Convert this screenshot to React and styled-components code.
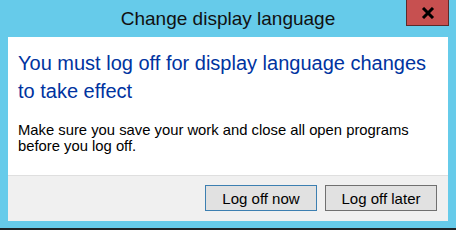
import React from 'react'
import styled, {createGlobalStyle, css} from 'styled-components'

const GlobalStyle = createGlobalStyle`
  html, body {
    margin: 0;
    padding: 0;
    width: 456px;
    height: 230px;
    overflow: hidden;
    background: #66cbea;
  }
  body {
    font-family: "Liberation Sans", Arial, sans-serif;
    color: #000;
  }
`

const Frame = styled.div`
  display: flex;
  flex-direction: column;
  width: 456px;
  height: 230px;
  box-sizing: border-box;
  background: #66cbea;
  border-bottom: 2px solid #1e2326;
`

const TitleBar = styled.div`
  display: grid;
  grid-template-columns: 1fr auto 1fr;
  align-items: start;
  height: 37px;
`

const Title = styled.div`
  grid-column: 2;
  font-size: 19px;
  line-height: 20px;
  padding-top: 9px;
  color: #111;
`

const CloseButton = styled.div`
  grid-column: 3;
  justify-self: end;
  margin-right: 7px;
  width: 43px;
  height: 26px;
  box-sizing: border-box;
  background: #c75050;
  border: 1px solid #5b2b2b;
  border-top: none;
  display: flex;
  align-items: center;
  justify-content: center;
`

const Panel = styled.div`
  margin: 0 8px;
  display: flex;
  flex-direction: column;
`

const Content = styled.div`
  background: #fff;
  height: 138px;
  box-sizing: border-box;
  padding: 12px 10px 0 10px;
`

const Heading = styled.div`
  font-size: 20px;
  line-height: 28px;
  color: #0033a0;
  margin-bottom: 17px;
`

const Body = styled.div`
  font-size: 14.8px;
  line-height: 16px;
  color: #000;
`

const Footer = styled.div`
  background: #f0f0f0;
  border-top: 1px solid #dfdfdf;
  height: 46px;
  box-sizing: border-box;
  display: flex;
  justify-content: flex-end;
  gap: 8px;
  padding: 9px 11px 0 0;
`

const Button = styled.div`
  width: 112px;
  height: 26px;
  box-sizing: border-box;
  background: #e1e1e1;
  border: 1px solid #707070;
  display: flex;
  align-items: center;
  justify-content: center;
  font-size: 15px;
  color: #000;
  ${(props) =>
    props.primary &&
    css`
      border-color: #3c7fb1;
    `}
`

const App = () => {
  return (
    <>
      <GlobalStyle />
      <Frame>
        <TitleBar>
          <Title>Change display language</Title>
          <CloseButton>
            <svg width="14" height="12" viewBox="0 0 14 12">
              <path d="M2 1 L12 11 M12 1 L2 11" stroke="#000" strokeWidth="3" />
            </svg>
          </CloseButton>
        </TitleBar>
        <Panel>
          <Content>
            <Heading>You must log off for display language changes to take effect</Heading>
            <Body>Make sure you save your work and close all open programs before you log off.</Body>
          </Content>
          <Footer>
            <Button primary>Log off now</Button>
            <Button>Log off later</Button>
          </Footer>
        </Panel>
      </Frame>
    </>
  )
}

export default App
